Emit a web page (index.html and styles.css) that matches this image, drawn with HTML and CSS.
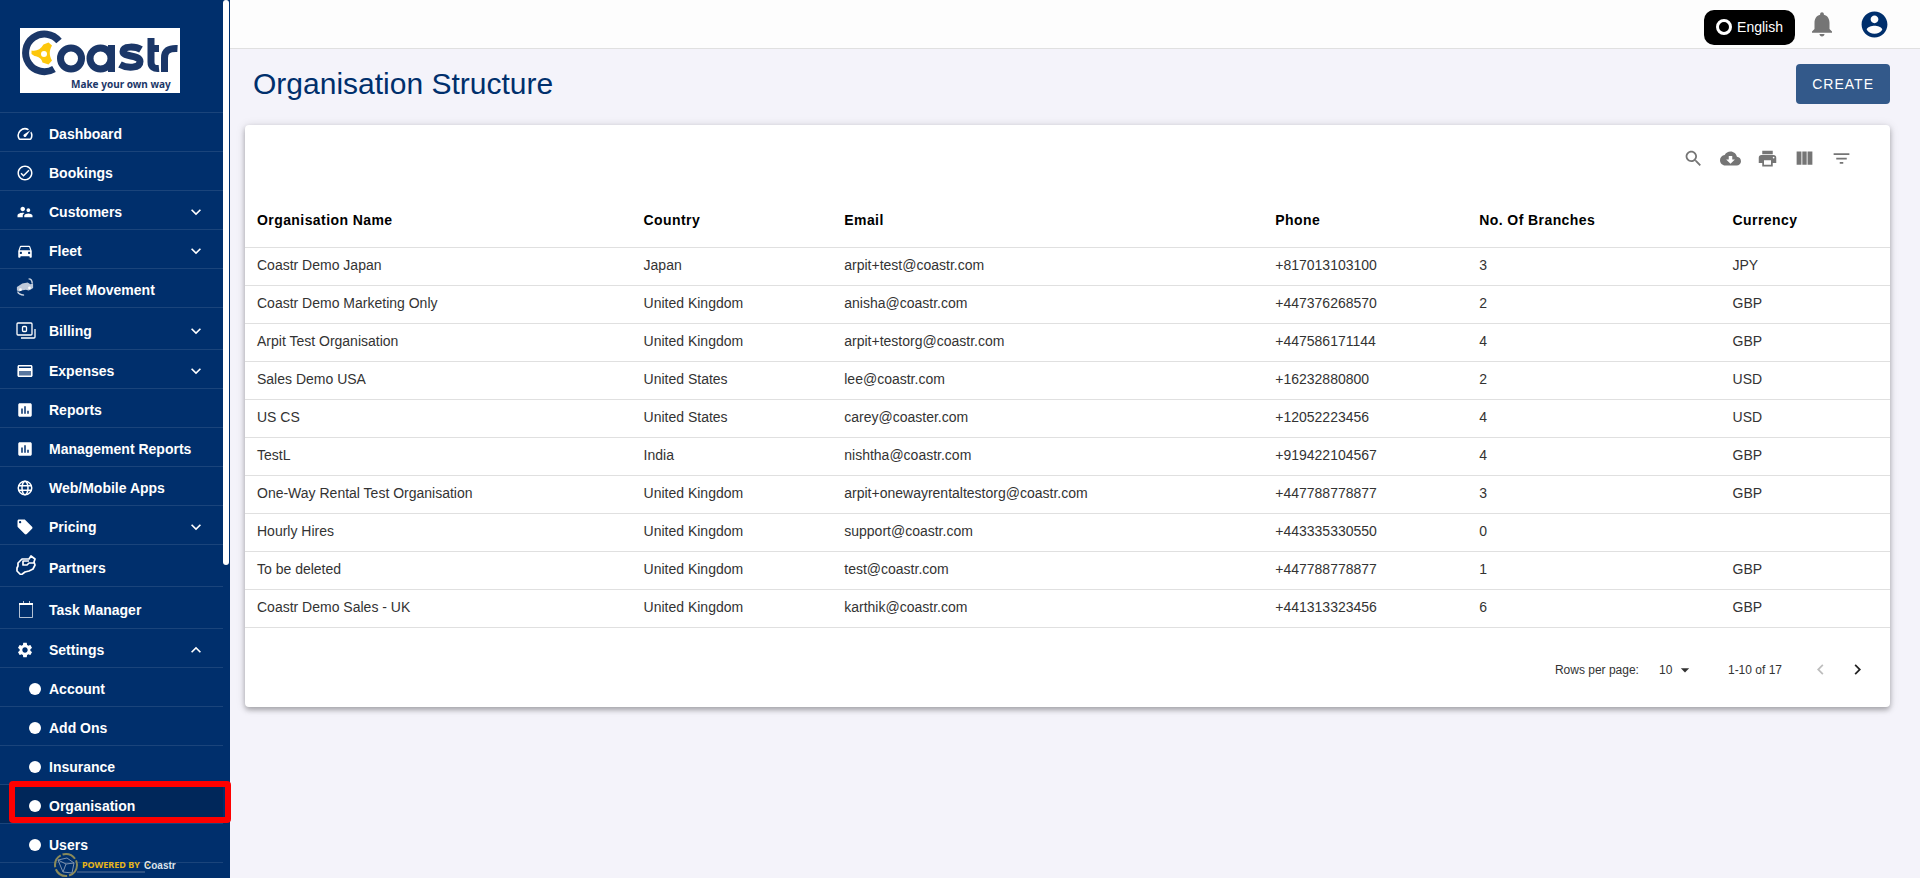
FILE: index.html
```
<!DOCTYPE html>
<html lang="en">
<head>
  <meta charset="UTF-8" />
  <meta name="viewport" content="width=device-width, initial-scale=1.0" />
  <title>Organisation Structure | Coastr</title>
  <link rel="stylesheet" href="styles.css">
</head>
<body>

  <!-- Icons shared by the repeated menu items -->
  <svg class="icon-defs" width="0" height="0" aria-hidden="true">
    <symbol id="chevron-down" viewBox="0 0 24 24"><path d="M7.41 8.59 12 13.17l4.59-4.58L18 10l-6 6-6-6z"/></symbol>
    <symbol id="chevron-up" viewBox="0 0 24 24"><path d="M7.41 15.41 12 10.83l4.59 4.58L18 14l-6-6-6 6z"/></symbol>
    <symbol id="chart-box" viewBox="0 0 24 24"><path d="M19 3H5c-1.100 0-2 .9-2 2v14c0 1.100.9 2 2 2h14c1.100 0 2-.9 2-2V5c0-1.100-.9-2-2-2zM9 17H7v-7h2v7zm4 0h-2V7h2v10zm4 0h-2v-4h2v4z"/></symbol>
  </svg>

  <aside class="sidebar">
    <a href="#" class="logo" aria-label="Coastr home">
      <svg viewBox="0 0 160 65">
        <rect width="160" height="65" fill="#fff"/>
        <g fill="none" stroke="#1b3768" stroke-width="7">
          <path d="M39 13A18.800 18.800 0 1 0 34 41"/>
          <circle cx="51" cy="30.500" r="10.500"/>
          <circle cx="80.500" cy="30.500" r="10.500"/>
          <path d="M91.500 17v27"/>
          <path d="M121 21.500c-5-3-18-4-18 2 0 6 17 3 17 10 0 7-13 7-20 3"/>
          <path d="M131 10v24c0 5 3 7 8 6.500M131 20.500h8"/>
          <path d="M144.500 44V30c0-7 4-10 13-9.500"/>
        </g>
        <path fill="#fdc70c" d="M11.500 22.500c5 1 9-1 12-6l5-2 3.500 3c-3 5-3 10 0 15l-3.500 4-6-2c-1-4-4-6-8-6.500l-3-2z"/>
        <circle cx="24" cy="26" r="3" fill="#fff"/>
        <text x="51" y="60" class="logo-tagline">Make your own way</text>
      </svg>
    </a>

    <nav class="menu">
      <a href="#" class="menu-item">
        <svg class="icon" viewBox="0 0 24 24"><path d="m20.380 8.570-1.230 1.850a8 8 0 0 1-.22 7.580H5.070A8 8 0 0 1 15.580 6.850l1.850-1.230A10 10 0 0 0 3.350 19a2 2 0 0 0 1.720 1h13.850a2 2 0 0 0 1.740-1 10 10 0 0 0-.27-10.440zm-9.790 6.840a2 2 0 0 0 2.830 0l5.660-8.490-8.490 5.660a2 2 0 0 0 0 2.830z"/></svg>
        <span>Dashboard</span>
      </a>
      <a href="#" class="menu-item">
        <svg class="icon" viewBox="0 0 24 24"><path d="M12 2C6.480 2 2 6.480 2 12s4.480 10 10 10 10-4.480 10-10S17.520 2 12 2zm0 18c-4.410 0-8-3.590-8-8s3.590-8 8-8 8 3.590 8 8-3.590 8-8 8zm4.590-12.420L10 14.170l-2.590-2.580L6 13l4 4 8-8z"/></svg>
        <span>Bookings</span>
      </a>
      <a href="#" class="menu-item">
        <svg class="icon" viewBox="0 0 24 24"><path d="M16.500 12c1.380 0 2.490-1.120 2.490-2.500S17.880 7 16.500 7 14 8.120 14 9.500s1.120 2.500 2.500 2.500zM9 11c1.660 0 2.990-1.340 2.990-3S10.660 5 9 5 6 6.340 6 8s1.340 3 3 3zm7.500 3c-1.830 0-5.500.92-5.500 2.750V19h11v-2.250c0-1.830-3.670-2.750-5.500-2.750zM9 13c-2.330 0-7 1.170-7 3.500V19h7v-2.250c0-.85.33-2.340 2.370-3.470C10.500 13.100 9.660 13 9 13z"/></svg>
        <span>Customers</span>
        <svg class="chevron"><use href="#chevron-down"/></svg>
      </a>
      <a href="#" class="menu-item">
        <svg class="icon" viewBox="0 0 24 24"><path d="M18.920 6.010C18.720 5.420 18.160 5 17.500 5h-11c-.66 0-1.210.42-1.420 1.010L3 12v8c0 .55.45 1 1 1h1c.55 0 1-.45 1-1v-1h12v1c0 .55.45 1 1 1h1c.55 0 1-.45 1-1v-8l-2.080-5.990zM6.500 16c-.83 0-1.500-.67-1.500-1.500S5.670 13 6.500 13s1.500.67 1.500 1.500S7.330 16 6.500 16zm11 0c-.83 0-1.500-.67-1.500-1.500s.67-1.500 1.500-1.500 1.500.67 1.500 1.500-.67 1.500-1.500 1.500zM5 11l1.500-4.500h11L19 11H5z"/></svg>
        <span>Fleet</span>
        <svg class="chevron"><use href="#chevron-down"/></svg>
      </a>
      <a href="#" class="menu-item">
        <svg class="icon icon-movement" viewBox="0 0 20 20"><path d="M1 10l3-2 3-2 6-1 3 2 3-1v5l-3 2-2 1-3-1-5 1-2 1-3-1z" fill-opacity=".75"/><path d="M14 1c3 0 4 2 4 5M2 15c0 2 3 4 7 4" fill="none" stroke="currentColor" stroke-width="1.600" stroke-opacity=".8"/><circle cx="5" cy="13" r="1.500"/><circle cx="15" cy="11" r="1.500"/></svg>
        <span>Fleet Movement</span>
      </a>
      <a href="#" class="menu-item menu-item-tall">
        <svg class="icon icon-large" viewBox="0 0 20 20" fill="none" stroke="currentColor" stroke-width="1.300"><rect x="1" y="2" width="15" height="12" rx="1"/><rect x="6.500" y="5.500" width="4" height="5" rx="1"/><path d="M19 8v8q0 1-1 1H5"/></svg>
        <span>Billing</span>
        <svg class="chevron"><use href="#chevron-down"/></svg>
      </a>
      <a href="#" class="menu-item">
        <svg class="icon" viewBox="0 0 24 24"><path d="M2 10h20v8c0 1.100-.9 2-2 2H4c-1.100 0-2-.9-2-2z" fill-opacity=".35"/><path d="M20 4H4c-1.110 0-1.990.89-1.990 2L2 18c0 1.110.89 2 2 2h16c1.110 0 2-.89 2-2V6c0-1.110-.89-2-2-2zm0 14H4v-6h16v6zm0-10H4V6h16v2z"/></svg>
        <span>Expenses</span>
        <svg class="chevron"><use href="#chevron-down"/></svg>
      </a>
      <a href="#" class="menu-item">
        <svg class="icon"><use href="#chart-box"/></svg>
        <span>Reports</span>
      </a>
      <a href="#" class="menu-item">
        <svg class="icon"><use href="#chart-box"/></svg>
        <span>Management Reports</span>
      </a>
      <a href="#" class="menu-item">
        <svg class="icon" viewBox="0 0 24 24" fill="none" stroke="currentColor" stroke-width="2"><circle cx="12" cy="12" r="9"/><ellipse cx="12" cy="12" rx="4" ry="9"/><path d="M3.500 9h17M3.500 15h17"/></svg>
        <span>Web/Mobile Apps</span>
      </a>
      <a href="#" class="menu-item">
        <svg class="icon" viewBox="0 0 24 24"><path d="m21.410 11.580-9-9C12.050 2.220 11.550 2 11 2H4c-1.100 0-2 .9-2 2v7c0 .55.22 1.050.59 1.420l9 9c.36.36.86.58 1.410.58.55 0 1.050-.22 1.410-.59l7-7c.37-.36.59-.86.59-1.410 0-.55-.23-1.060-.59-1.420zM5.500 7C4.670 7 4 6.330 4 5.500S4.670 4 5.500 4 7 4.670 7 5.500 6.330 7 5.500 7z"/></svg>
        <span>Pricing</span>
        <svg class="chevron"><use href="#chevron-down"/></svg>
      </a>
      <a href="#" class="menu-item menu-item-tall">
        <svg class="icon icon-large icon-partners" viewBox="0 0 20 20" fill="none" stroke="currentColor" stroke-width="1.700" stroke-linejoin="round"><path d="M1 16v-3l1-2V8l4-4h7l2-3 4 3-1 3 1 3-2 4-4 2-4 1-4 3zM13 6H7v4h4l2-2h5"/></svg>
        <span>Partners</span>
      </a>
      <a href="#" class="menu-item menu-item-tall">
        <svg class="icon icon-large" viewBox="0 0 20 20" fill="none" stroke="currentColor"><path d="M3.500 4v13.500h13V4M7.500 1v3M13.500 1v3" stroke-opacity=".7"/><path d="M3 4h14" stroke-width="2"/></svg>
        <span>Task Manager</span>
      </a>
      <a href="#" class="menu-item">
        <svg class="icon" viewBox="0 0 24 24"><path d="M19.140 12.940c.04-.3.06-.61.06-.94 0-.32-.02-.64-.07-.94l2.030-1.580c.18-.14.23-.41.12-.61l-1.920-3.320c-.12-.22-.37-.29-.59-.22l-2.390.96c-.5-.38-1.030-.7-1.620-.94l-.36-2.540c-.04-.24-.24-.41-.48-.41h-3.840c-.24 0-.43.17-.47.41l-.36 2.540c-.59.24-1.130.57-1.620.94l-2.390-.96c-.22-.08-.47 0-.59.22L2.740 8.870c-.12.21-.08.47.12.61l2.030 1.580c-.05.3-.09.63-.09.94s.02.64.07.94l-2.030 1.580c-.18.14-.23.41-.12.61l1.920 3.320c.12.22.37.29.59.22l2.390-.96c.5.38 1.030.7 1.620.94l.36 2.540c.05.24.24.41.48.41h3.840c.24 0 .44-.17.47-.41l.36-2.540c.59-.24 1.130-.56 1.620-.94l2.390.96c.22.08.47 0 .59-.22l1.920-3.320c.12-.22.07-.47-.12-.61l-2.010-1.580zM12 15.600c-1.980 0-3.600-1.620-3.600-3.600s1.620-3.600 3.600-3.600 3.600 1.620 3.600 3.600-1.620 3.600-3.600 3.600z"/></svg>
        <span>Settings</span>
        <svg class="chevron"><use href="#chevron-up"/></svg>
      </a>

      <!-- Settings submenu -->
      <a href="#" class="menu-item sub-item"><i class="dot"></i><span>Account</span></a>
      <a href="#" class="menu-item sub-item"><i class="dot"></i><span>Add Ons</span></a>
      <a href="#" class="menu-item sub-item"><i class="dot"></i><span>Insurance</span></a>
      <a href="#" class="menu-item sub-item active"><i class="dot"></i><span>Organisation</span></a>
      <a href="#" class="menu-item sub-item"><i class="dot"></i><span>Users</span></a>
      <a href="#" class="menu-item sub-item" aria-label="More settings"><i class="dot"></i></a>
    </nav>

    <div class="scroll-thumb"></div>

    <div class="powered-by">
      <svg viewBox="0 0 126 26">
        <circle cx="13" cy="13" r="11" fill="none" stroke="#8a8a5a" stroke-width="2" stroke-dasharray="14 2"/>
        <path d="M5 8l9-2 7 5-2 10-9-1zM5 8l8 4 8-1M13 12l-3 8" fill="none" stroke="#7f93ae"/>
        <path d="M24 20h68" stroke="#5d7597" stroke-width="1"/>
        <text x="29" y="16" class="powered-text">POWERED BY</text>
        <text x="91" y="17" class="powered-brand">Coastr</text>
        <circle cx="95" cy="13" r="1" fill="#e8b71a"/>
      </svg>
    </div>
  </aside>

  <div class="page">
    <header class="topbar">
      <button type="button" class="language"><i class="ring"></i>English</button>
      <button type="button" class="icon-btn bell" aria-label="Notifications">
        <svg viewBox="0 0 24 24"><path d="M12 22c1.100 0 2-.9 2-2h-4c0 1.100.89 2 2 2zm6-6v-5c0-3.070-1.640-5.640-4.500-6.320V4c0-.83-.67-1.500-1.500-1.500s-1.500.67-1.500 1.500v.68C7.630 5.360 6 7.920 6 11v5l-2 2v1h16v-1l-2-2z"/></svg>
      </button>
      <button type="button" class="icon-btn profile" aria-label="Profile">
        <svg viewBox="0 0 24 24"><path d="M12 2C6.480 2 2 6.480 2 12s4.480 10 10 10 10-4.480 10-10S17.520 2 12 2zm0 3c1.660 0 3 1.340 3 3s-1.340 3-3 3-3-1.340-3-3 1.340-3 3-3zm0 14.200c-2.500 0-4.710-1.280-6-3.220.03-1.990 4-3.080 6-3.080 1.990 0 5.970 1.090 6 3.080-1.290 1.940-3.500 3.220-6 3.220z"/></svg>
      </button>
    </header>

    <main>
      <div class="page-head">
        <h1>Organisation Structure</h1>
        <button type="button" class="create-btn">CREATE</button>
      </div>

      <section class="card">
        <div class="toolbar">
          <button type="button" class="icon-btn" aria-label="Search">
            <svg viewBox="0 0 24 24"><path d="M15.500 14h-.79l-.28-.27C15.410 12.590 16 11.110 16 9.500 16 5.910 13.090 3 9.500 3S3 5.910 3 9.500 5.910 16 9.500 16c1.610 0 3.090-.59 4.230-1.570l.27.28v.79l5 4.990L20.490 19l-4.990-5zm-6 0C7.010 14 5 11.990 5 9.500S7.010 5 9.500 5 14 7.010 14 9.500 11.990 14 9.500 14z"/></svg>
          </button>
          <button type="button" class="icon-btn" aria-label="Download CSV">
            <svg viewBox="0 0 24 24"><path d="M19.350 10.040C18.670 6.590 15.640 4 12 4 9.110 4 6.600 5.640 5.350 8.040 2.340 8.360 0 10.910 0 14c0 3.310 2.690 6 6 6h13c2.760 0 5-2.240 5-5 0-2.640-2.050-4.780-4.650-4.960zM17 13l-5 5-5-5h3V9h4v4h3z"/></svg>
          </button>
          <button type="button" class="icon-btn" aria-label="Print">
            <svg viewBox="0 0 24 24"><path d="M19 8H5c-1.660 0-3 1.340-3 3v6h4v4h12v-4h4v-6c0-1.660-1.340-3-3-3zm-3 11H8v-5h8v5zm3-7c-.55 0-1-.45-1-1s.45-1 1-1 1 .45 1 1-.45 1-1 1zm-1-9H6v4h12V3z"/></svg>
          </button>
          <button type="button" class="icon-btn" aria-label="View columns">
            <svg viewBox="0 0 24 24"><path d="M9.500 19h5V4h-5v15zm-6.500 0h5.500V4H3v15zM15.500 4v15H21V4h-5.500z"/></svg>
          </button>
          <button type="button" class="icon-btn" aria-label="Filter table">
            <svg viewBox="0 0 24 24"><path d="M10 18h4v-2h-4v2zM3 6v2h18V6H3zm3 7h12v-2H6v2z"/></svg>
          </button>
        </div>

        <table>
          <thead>
            <tr>
              <th class="col-name">Organisation Name</th>
              <th class="col-country">Country</th>
              <th class="col-email">Email</th>
              <th class="col-phone">Phone</th>
              <th class="col-branches">No. Of Branches</th>
              <th>Currency</th>
            </tr>
          </thead>
          <tbody>
            <tr><td>Coastr Demo Japan</td><td>Japan</td><td>arpit+test@coastr.com</td><td>+817013103100</td><td>3</td><td>JPY</td></tr>
            <tr><td>Coastr Demo Marketing Only</td><td>United Kingdom</td><td>anisha@coastr.com</td><td>+447376268570</td><td>2</td><td>GBP</td></tr>
            <tr><td>Arpit Test Organisation</td><td>United Kingdom</td><td>arpit+testorg@coastr.com</td><td>+447586171144</td><td>4</td><td>GBP</td></tr>
            <tr><td>Sales Demo USA</td><td>United States</td><td>lee@coastr.com</td><td>+16232880800</td><td>2</td><td>USD</td></tr>
            <tr><td>US CS</td><td>United States</td><td>carey@coaster.com</td><td>+12052223456</td><td>4</td><td>USD</td></tr>
            <tr><td>TestL</td><td>India</td><td>nishtha@coastr.com</td><td>+919422104567</td><td>4</td><td>GBP</td></tr>
            <tr><td>One-Way Rental Test Organisation</td><td>United Kingdom</td><td>arpit+onewayrentaltestorg@coastr.com</td><td>+447788778877</td><td>3</td><td>GBP</td></tr>
            <tr><td>Hourly Hires</td><td>United Kingdom</td><td>support@coastr.com</td><td>+443335330550</td><td>0</td><td></td></tr>
            <tr><td>To be deleted</td><td>United Kingdom</td><td>test@coastr.com</td><td>+447788778877</td><td>1</td><td>GBP</td></tr>
            <tr><td>Coastr Demo Sales - UK</td><td>United Kingdom</td><td>karthik@coastr.com</td><td>+441313323456</td><td>6</td><td>GBP</td></tr>
          </tbody>
        </table>

        <div class="pagination">
          <label for="rowsPerPage">Rows per page:</label>
          <div class="select-wrap">
            <select id="rowsPerPage">
              <option>10</option>
              <option>15</option>
              <option>100</option>
            </select>
            <svg viewBox="0 0 24 24"><path d="m7 10 5 5 5-5z"/></svg>
          </div>
          <span class="range">1-10 of 17</span>
          <button type="button" class="icon-btn page-btn" aria-label="Previous page" disabled>
            <svg viewBox="0 0 24 24"><path d="M15.410 7.410 14 6l-6 6 6 6 1.410-1.410L10.830 12z"/></svg>
          </button>
          <button type="button" class="icon-btn page-btn" aria-label="Next page">
            <svg viewBox="0 0 24 24"><path d="M10 6 8.590 7.410 13.170 12l-4.580 4.590L10 18l6-6z"/></svg>
          </button>
        </div>
      </section>
    </main>
  </div>

</body>
</html>
```
FILE: styles.css
```
*,
*::after {
  box-sizing: border-box;
}

body {
  margin: 0;
  height: 100vh;
  display: flex;
  overflow: hidden;
  background: #f4f3fa;
  color: #333;
  font-family: "Liberation Sans", Arial, sans-serif;
  font-size: 14px;
}

button,
select {
  font-family: inherit;
}

a {
  color: inherit;
  text-decoration: none;
}

svg {
  display: block;
  fill: currentColor;
}

.icon-defs {
  position: absolute;
}

/* Sidebar */

.sidebar {
  position: relative;
  flex: 0 0 230px;
  background: #002f6c;
  color: #fff;
}

.logo {
  display: block;
  width: 160px;
  margin: 28px 0 19px 20px;
}

.logo-tagline {
  font: bold 10px "Noto Sans", sans-serif;
  fill: #1b3768;
}

.menu {
  height: calc(100vh - 112px);
  padding-right: 7px;
  overflow: hidden;
}

.menu-item {
  display: flex;
  align-items: center;
  height: 39px;
  padding: 4px 17px 0 16px;
  border-top: 1px solid #1a447b;
  font-weight: bold;
}

.menu-item-tall {
  height: 42px;
}

.menu-item span {
  flex: 1;
}

.icon {
  width: 18px;
  height: 18px;
  margin-right: 15px;
}

.icon[fill="none"] {
  fill: none;
}

.icon-movement,
.icon-partners {
  margin-bottom: 6px;
}

.icon-large {
  width: 20px;
  height: 20px;
  margin-right: 13px;
}

.chevron {
  width: 20px;
  height: 20px;
}

.sub-item {
  padding-left: 29px;
}

.dot {
  width: 12px;
  height: 12px;
  margin-right: 8px;
  border-radius: 50%;
  background: #fff;
}

.sub-item.active {
  background: #00275a;
}

/* red frame round the selected page */
.sub-item.active::after {
  content: "";
  position: absolute;
  left: 9px;
  width: 222px;
  height: 42px;
  margin-bottom: 8px;
  border: 6px solid #fe0000;
  border-radius: 4px;
}

.scroll-thumb {
  position: absolute;
  top: 0;
  right: 1px;
  width: 6px;
  height: 565px;
  border-radius: 3px;
  background: #fff;
}

.powered-by {
  position: absolute;
  left: 53px;
  bottom: 0;
  width: 126px;
}

.powered-text {
  font: bold 9px "Noto Sans", sans-serif;
  fill: #e8b71a;
}

.powered-brand {
  font: bold 10px "Liberation Sans", sans-serif;
  fill: #dde3ec;
}

/* Top bar */

.page {
  flex: 1;
  min-width: 0;
}

.topbar {
  display: flex;
  justify-content: flex-end;
  align-items: center;
  height: 49px;
  padding-right: 30px;
  border-bottom: 1px solid #e0e0e0;
  background: #fdfdfd;
}

.language {
  display: flex;
  align-items: center;
  gap: 5px;
  height: 35px;
  margin-top: 6px;
  padding: 0 12px;
  border: none;
  border-radius: 10px;
  background: #000;
  color: #fff;
  font-size: 14px;
}

.ring {
  width: 16px;
  height: 16px;
  border: 3px solid #fff;
  border-radius: 50%;
}

.icon-btn {
  padding: 0;
  border: none;
  background: none;
  color: #757575;
  cursor: pointer;
}

.bell {
  width: 30px;
  margin-left: 12px;
}

.profile {
  width: 31px;
  margin-left: 22px;
  color: #002f6c;
}

/* Page content */

main {
  padding: 15px 30px 0 15px;
}

.page-head {
  display: flex;
  justify-content: space-between;
  align-items: center;
  height: 40px;
  margin-bottom: 21px;
  padding-left: 8px;
}

h1 {
  margin: 0;
  color: #002f6c;
  font-size: 30px;
  font-weight: normal;
}

.create-btn {
  height: 40px;
  padding: 0 16px;
  border: none;
  border-radius: 4px;
  background: #33598a;
  color: #fff;
  font-size: 14px;
  letter-spacing: 1px;
  cursor: pointer;
}

.card {
  border-radius: 4px;
  background: #fff;
  box-shadow: 0 3px 5px rgba(0, 0, 0, 0.25), 0 1px 10px rgba(0, 0, 0, 0.15);
}

.toolbar {
  display: flex;
  justify-content: flex-end;
  align-items: center;
  gap: 16px;
  height: 67px;
  padding: 0 38px;
}

.toolbar svg {
  width: 21px;
  height: 21px;
}

table {
  width: 100%;
  table-layout: fixed;
  border-collapse: collapse;
}

th,
td {
  padding: 0 12px;
  border-bottom: 1px solid #e0e0e0;
  text-align: left;
}

th {
  height: 55px;
  padding-top: 2px;
  color: #000;
  letter-spacing: 0.03em;
}

td {
  height: 38px;
  padding-bottom: 2px;
}

.col-name {
  width: 23.5%;
}

.col-country {
  width: 12.2%;
}

.col-email {
  width: 26.2%;
}

.col-phone {
  width: 12.4%;
}

.col-branches {
  width: 15.4%;
}

.pagination {
  display: flex;
  align-items: center;
  justify-content: flex-end;
  height: 79px;
  padding: 5px 22px 0;
  font-size: 12px;
}

.select-wrap {
  display: flex;
  align-items: center;
  position: relative;
  margin: 0 33px 0 20px;
}

.select-wrap select {
  width: 36px;
  padding: 0;
  border: none;
  background: none;
  color: inherit;
  font-size: 12px;
  appearance: none;
}

.select-wrap svg {
  position: absolute;
  right: 0;
  width: 20px;
  height: 20px;
  pointer-events: none;
}

.range {
  margin-right: 28px;
}

.page-btn {
  color: #212121;
}

.page-btn svg {
  width: 21px;
}

.page-btn + .page-btn {
  margin-left: 16px;
}

.page-btn:disabled {
  color: #bdbdbd;
}
```
